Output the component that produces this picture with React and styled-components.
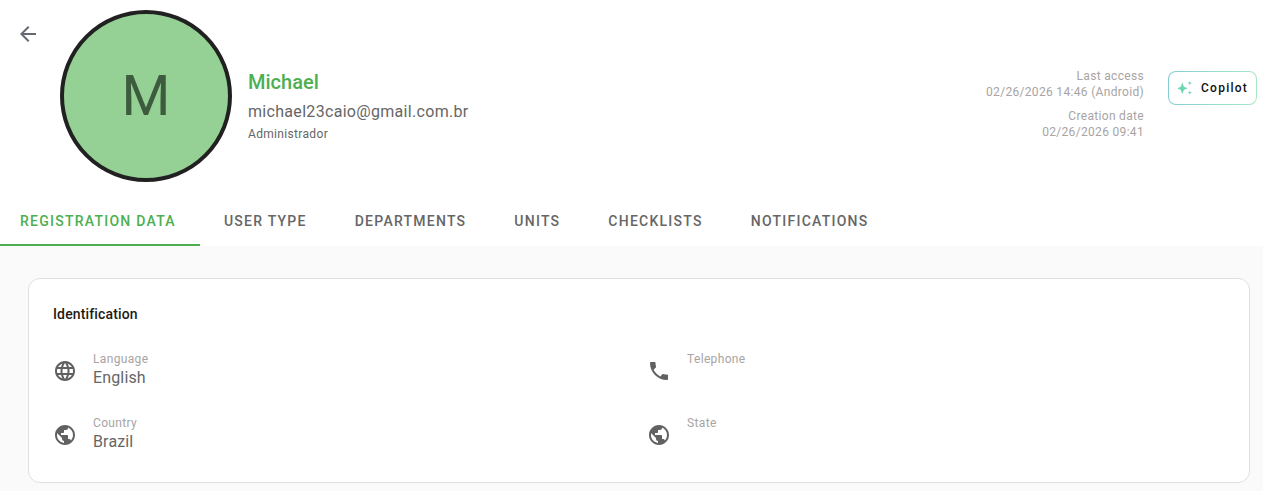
import React from "react";
import styled, { createGlobalStyle } from "styled-components";
import { MdArrowBack, MdLanguage, MdPhone, MdPublic } from "react-icons/md";

const GlobalStyle = createGlobalStyle`
  html, body {
    margin: 0;
    padding: 0;
    background: #fafafa;
    font-family: Roboto, "Liberation Sans", sans-serif;
  }
`;

const Page = styled.div`
  width: 1263px;
  height: 491px;
  overflow: hidden;
  display: flex;
  flex-direction: column;
`;
const Top = styled.header`
  height: 246px;
  flex: none;
  background: #fff;
  display: flex;
  flex-direction: column;
`;
const Profile = styled.div`
  height: 197px;
  flex: none;
  display: flex;
  align-items: flex-start;
  padding: 10px 6px 0 16px;
  box-sizing: border-box;
`;
const BackButton = styled.button`
  width: 24px;
  height: 24px;
  margin: 12px 0 0;
  padding: 0;
  border: 0;
  background: none;
  color: #666a70;
  display: flex;
  align-items: center;
  justify-content: center;
`;
const Avatar = styled.div`
  width: 172px;
  height: 172px;
  margin-left: 20px;
  flex: none;
  box-sizing: border-box;
  border: 4px solid #212121;
  border-radius: 50%;
  background: #95d095;
  color: #3d5c3e;
  font-size: 56px;
  display: flex;
  align-items: center;
  justify-content: center;
`;
const Identity = styled.div`
  margin: 58px 0 0 16px;
  flex: 1;
  display: flex;
  flex-direction: column;
`;
const Name = styled.div`
  font-size: 20px;
  font-weight: 500;
  line-height: 28px;
  color: #4caf50;
`;
const Email = styled.div`
  margin-top: 4px;
  font-size: 16px;
  line-height: 24px;
  letter-spacing: 0.31px;
  color: #666666;
`;
const Role = styled.div`
  margin-top: 1px;
  font-size: 12px;
  line-height: 18px;
  letter-spacing: 0.33px;
  color: #666666;
`;
const Access = styled.div`
  margin-top: 58px;
  display: flex;
  flex-direction: column;
  align-items: flex-end;
  gap: 8px;
`;
const AccessBlock = styled.div`
  text-align: right;
  font-size: 12px;
  line-height: 16px;
  letter-spacing: 0.32px;
  color: #a8a4a4;
`;
const CopilotButton = styled.button`
  margin: 61px 0 0 24px;
  width: 89px;
  height: 34px;
  padding: 0 0 0 7px;
  box-sizing: border-box;
  border: 1px solid transparent;
  border-radius: 8px;
  background: linear-gradient(#fff, #fff) padding-box,
    linear-gradient(90deg, #85cdd6, #a6e8c4) border-box;
  display: flex;
  align-items: center;
  gap: 7px;
  font-family: inherit;
  font-size: 12px;
  font-weight: 500;
  letter-spacing: 1.25px;
  color: #111;
`;
const TabBar = styled.nav`
  height: 49px;
  display: flex;
`;
const Tab = styled.div`
  height: 49px;
  box-sizing: border-box;
  padding: 1px 24px 0;
  display: flex;
  align-items: center;
  font-size: 14px;
  font-weight: 500;
  letter-spacing: 1.25px;
  color: ${(p) => (p.$active ? "#4caf50" : "#666666")};
  border-bottom: 2px solid ${(p) => (p.$active ? "#4caf50" : "transparent")};
  &:first-child {
    padding: 1px 24px 0 20px;
  }
`;
const Content = styled.main`
  flex: 1;
  padding: 32px 13px 0 28px;
`;
const Card = styled.section`
  height: 205px;
  box-sizing: border-box;
  border: 1px solid #e0e0e0;
  border-radius: 12px;
  background: #fff;
  padding: 25px 24px 0;
`;
const CardTitle = styled.h2`
  margin: 0;
  font-size: 14px;
  font-weight: 500;
  line-height: 20px;
  letter-spacing: 0.15px;
  color: #1e1a14;
`;
const FieldGrid = styled.div`
  margin-top: 26px;
  display: grid;
  grid-template-columns: 594px 1fr;
  grid-auto-rows: 42px;
  row-gap: 22px;
`;
const Field = styled.div`
  display: flex;
  align-items: center;
  gap: 16px;
  color: #616161;
`;
const FieldText = styled.div`
  height: 42px;
  display: flex;
  flex-direction: column;
`;
const FieldLabel = styled.div`
  font-size: 12px;
  line-height: 18px;
  letter-spacing: 0.35px;
  color: #a8a4a4;
`;
const FieldValue = styled.div`
  font-size: 16px;
  line-height: 20px;
  letter-spacing: 0.15px;
  color: #666666;
`;

const tabs = ["Registration data", "User type", "Departments", "Units", "Checklists", "Notifications"];

const fields = [
  { icon: MdLanguage, label: "Language", value: "English" },
  { icon: MdPhone, label: "Telephone" },
  { icon: MdPublic, label: "Country", value: "Brazil" },
  { icon: MdPublic, label: "State" },
];

const Sparkles = () => (
  <svg width="18" height="18" viewBox="0 0 18 18" aria-hidden="true">
    <path fill="#6fd6b4" d="M6.3 3.6 7.9 7.7 11.6 9.3 7.9 10.9 6.3 15 4.7 10.9 1.2 9.3 4.7 7.7z" />
    <path fill="#72cfd0" d="M13.8 2l.6 1.5 1.5.6-1.5.6-.6 1.5-.6-1.5-1.5-.6 1.5-.6zM13.8 11.6l.6 1.5 1.5.6-1.5.6-.6 1.5-.6-1.5-1.5-.6 1.5-.6z" />
  </svg>
);

export default function App() {
  return (
    <Page>
      <GlobalStyle />
      <Top>
        <Profile>
          <BackButton aria-label="Back">
            <MdArrowBack size={24} />
          </BackButton>
          <Avatar>M</Avatar>
          <Identity>
            <Name>Michael</Name>
            <Email>michael23caio@gmail.com.br</Email>
            <Role>Administrador</Role>
          </Identity>
          <Access>
            <AccessBlock>
              Last access
              <br />
              02/26/2026 14:46 (Android)
            </AccessBlock>
            <AccessBlock>
              Creation date
              <br />
              02/26/2026 09:41
            </AccessBlock>
          </Access>
          <CopilotButton>
            <Sparkles />
            Copilot
          </CopilotButton>
        </Profile>
        <TabBar>
          {tabs.map((t, i) => (
            <Tab key={t} $active={i === 0}>
              {t.toUpperCase()}
            </Tab>
          ))}
        </TabBar>
      </Top>
      <Content>
        <Card>
          <CardTitle>Identification</CardTitle>
          <FieldGrid>
            {fields.map(({ icon: Icon, label, value }) => (
              <Field key={label}>
                <Icon size={24} />
                <FieldText>
                  <FieldLabel>{label}</FieldLabel>
                  {value && <FieldValue>{value}</FieldValue>}
                </FieldText>
              </Field>
            ))}
          </FieldGrid>
        </Card>
      </Content>
    </Page>
  );
}
